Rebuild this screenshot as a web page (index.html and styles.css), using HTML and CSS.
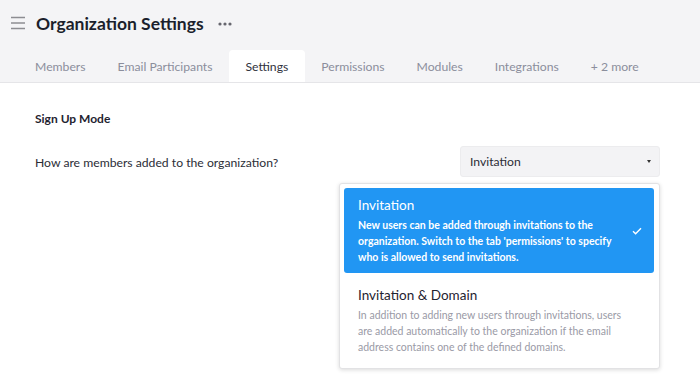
FILE: index.html
```html
<!DOCTYPE html>
<html lang="en">
<head>
    <meta charset="UTF-8">
    <meta name="viewport" content="width=device-width, initial-scale=1.0">
    <title>Organization Settings</title>
    <link rel="stylesheet" href="styles.css">
</head>
<body>
    <div class="page-header">
        <div class="title-row">
            <button class="menu-btn" aria-label="Menu">
                <svg width="14" height="14" viewBox="0 0 14 14"><path d="M0 1.5h14M0 7h14M0 12.5h14" stroke="#8d8d92" stroke-width="1.6"/></svg>
            </button>
            <h1 class="page-title">Organization Settings</h1>
            <button class="more-btn" aria-label="More">
                <svg width="14" height="4" viewBox="0 0 14 4"><circle cx="2" cy="2" r="1.6" fill="#66666e"/><circle cx="7" cy="2" r="1.6" fill="#66666e"/><circle cx="12" cy="2" r="1.6" fill="#66666e"/></svg>
            </button>
        </div>
        <ul class="tabs">
            <li class="tab">Members</li>
            <li class="tab">Email Participants</li>
            <li class="tab active">Settings</li>
            <li class="tab">Permissions</li>
            <li class="tab">Modules</li>
            <li class="tab">Integrations</li>
            <li class="tab">+ 2 more</li>
        </ul>
    </div>

    <div class="content">
        <h3 class="section-title">Sign Up Mode</h3>
        <div class="field-row">
            <label class="field-label">How are members added to the organization?</label>
            <div class="select-wrap">
                <div class="select-box">
                    <span>Invitation</span>
                    <span class="caret"></span>
                </div>
                <ul class="dropdown">
                    <li class="option selected">
                        <div class="option-text">
                            <div class="option-title">Invitation</div>
                            <div class="option-desc">New users can be added through invitations to the organization. Switch to the tab 'permissions' to specify who is allowed to send invitations.</div>
                        </div>
                        <div class="option-check">
                            <svg width="10" height="8" viewBox="0 0 10 8"><path d="M1 4.2l2.6 2.5L9 1.2" fill="none" stroke="#fff" stroke-width="1.4"/></svg>
                        </div>
                    </li>
                    <li class="option">
                        <div class="option-text">
                            <div class="option-title">Invitation &amp; Domain</div>
                            <div class="option-desc">In addition to adding new users through invitations, users are added automatically to the organization if the email address contains one of the defined domains.</div>
                        </div>
                        <div class="option-check"></div>
                    </li>
                </ul>
            </div>
        </div>
    </div>
</body>
</html>
```

FILE: styles.css
```css
html, body {
    height: 100%;
}
body {
    margin: 0;
    font-family: Lato, "Open Sans", sans-serif;
    background-color: #fff;
    color: #1f2330;
    overflow: hidden;
}
button {
    border: none;
    background: none;
    padding: 0;
    cursor: pointer;
}
.page-header {
    background-color: #f4f4f6;
    border-bottom: 1px solid #e5e5e8;
}
.title-row {
    display: flex;
    align-items: center;
    height: 44px;
    padding-left: 11px;
    padding-top: 1px;
}
.menu-btn {
    display: flex;
    margin-right: 11px;
}
.page-title {
    margin: 0;
    font-size: 17.5px;
    font-weight: 700;
    color: #1b1f2c;
}
.more-btn {
    display: flex;
    margin-left: 14px;
    margin-top: 2px;
}
.tabs {
    list-style: none;
    margin: 5px 0 0;
    padding: 0 0 0 19px;
    display: flex;
}
.tab {
    padding: 0 16px;
    height: 32px;
    line-height: 34px;
    font-size: 12.2px;
    color: #8b8e9c;
    border-radius: 4px 4px 0 0;
}
.tab.active {
    padding: 0 17px;
    background-color: #fff;
    color: #30323c;
}
.content {
    padding: 26px 40px 0 35px;
}
.section-title {
    margin: 0;
    font-size: 12px;
    font-weight: 700;
    line-height: 20px;
    color: #1f2330;
}
.field-row {
    display: flex;
    justify-content: space-between;
    align-items: flex-start;
    margin-top: 17px;
}
.field-label {
    font-size: 12.2px;
    line-height: 20px;
    margin-top: 7px;
    color: #2b2d36;
}
.select-wrap {
    position: relative;
    width: 200px;
}
.select-box {
    display: flex;
    justify-content: space-between;
    align-items: center;
    height: 31px;
    box-sizing: border-box;
    padding: 0 8px 0 9px;
    background-color: #f3f3f5;
    border: 1px solid #ececee;
    border-radius: 3px;
    font-size: 12.2px;
    color: #2b2d36;
}
.caret {
    width: 0;
    height: 0;
    border-left: 2.5px solid transparent;
    border-right: 2.5px solid transparent;
    border-top: 3px solid #333;
}
.dropdown {
    position: absolute;
    z-index: 10;
    top: 37px;
    right: 0;
    width: 321px;
    box-sizing: border-box;
    list-style: none;
    margin: 0;
    padding: 4px 5px 5px 4px;
    background-color: #fff;
    border: 1px solid #e2e2e4;
    border-radius: 3px;
    box-shadow: 0 1px 4px rgba(0, 0, 0, 0.15);
}
.option {
    display: flex;
    align-items: center;
    padding: 8px 0 8px 14px;
    border-radius: 3px;
}
.option + .option {
    margin-top: 5px;
}
.option.selected {
    background-color: #2196f3;
    color: #fff;
}
.option-text {
    width: 272px;
}
.option-title {
    font-size: 13.5px;
    line-height: 19px;
    color: #1f2330;
}
.option-desc {
    margin-top: 2px;
    font-size: 10.5px;
    line-height: 16px;
    color: #9a9aa6;
}
.option.selected .option-title,
.option.selected .option-desc {
    color: #fff;
}
.option.selected .option-desc {
    font-weight: 700;
}
.option-check {
    flex: 1;
    display: flex;
    justify-content: center;
    padding-right: 10px;
}
```
